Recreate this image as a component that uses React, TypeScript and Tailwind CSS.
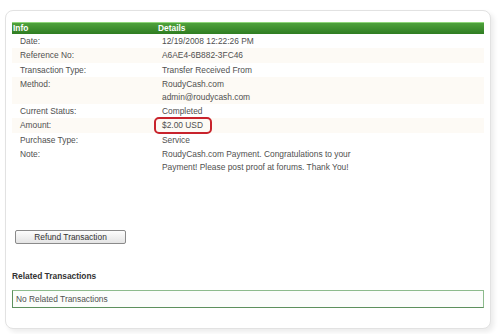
import React from 'react';

const rows: { label: string; value: React.ReactNode; shade?: boolean }[] = [
  { label: 'Date:', value: '12/19/2008 12:22:26 PM' },
  { label: 'Reference No:', value: 'A6AE4-6B882-3FC46', shade: true },
  { label: 'Transaction Type:', value: 'Transfer Received From' },
  {
    label: 'Method:',
    value: (
      <>
        RoudyCash.com
        <br />
        admin@roudycash.com
      </>
    ),
    shade: true,
  },
  { label: 'Current Status:', value: 'Completed' },
  {
    label: 'Amount:',
    value: (
      <span className="relative inline-block">
        $2.00 USD
        <span className="absolute -left-[8px] -right-[9px] -top-[2px] -bottom-[2px] border-2 border-[#c8232c] rounded-[5px]" />
      </span>
    ),
    shade: true,
  },
  { label: 'Purchase Type:', value: 'Service' },
  {
    label: 'Note:',
    value: (
      <>
        RoudyCash.com Payment. Congratulations to your
        <br />
        Payment! Please post proof at forums. Thank You!
      </>
    ),
  },
];

export default function App() {
  return (
    <div className="w-[500px] h-[334px] bg-white pl-[5px] pt-[10px] font-['Liberation_Sans',Arial,sans-serif] text-[8.4px] text-[#505050]">
      <div className="w-[486px] h-[319px] rounded-[8px] border border-[#e2e2e2] bg-white shadow-[3px_3px_5px_rgba(0,0,0,0.08)] px-[6px] pt-[11px]">
        {/* details table */}
        <div className="grid grid-cols-[146px_1fr] h-[12px] bg-gradient-to-b from-[#4fa23c] to-[#2f7d22] border-t border-[#8fd67a] text-white font-bold leading-[11px]">
          <div className="pl-[1px]">Info</div>
          <div className="pl-0">Details</div>
        </div>
        {rows.map((r) => (
          <div
            key={r.label}
            className={`grid grid-cols-[146px_1fr] py-[1px] leading-[12.4px] ${r.shade ? 'bg-[#fdfaf5]' : 'bg-white'}`}
          >
            <div className="pl-[8px]">{r.label}</div>
            <div className="pl-[4px]">{r.value}</div>
          </div>
        ))}

        <div className="pt-[56px] pl-[3px]">
          <button className="w-[111px] h-[14px] rounded-[2px] border border-[#8a8a8a] bg-gradient-to-b from-[#fdfdfd] to-[#e4e4e4] text-[8.4px] leading-[12px] text-[#333]">
            Refund Transaction
          </button>
        </div>

        <div className="pt-[27px] font-bold text-[#333] leading-[10px]">Related Transactions</div>

        <div className="mt-[9px] h-[18px] border border-[#8dbb8d] border-l-[#5d905d] border-b-[#5d905d] bg-[#fbfdfb] pl-[3px] leading-[16px]">
          No Related Transactions
        </div>
      </div>
    </div>
  );
}
